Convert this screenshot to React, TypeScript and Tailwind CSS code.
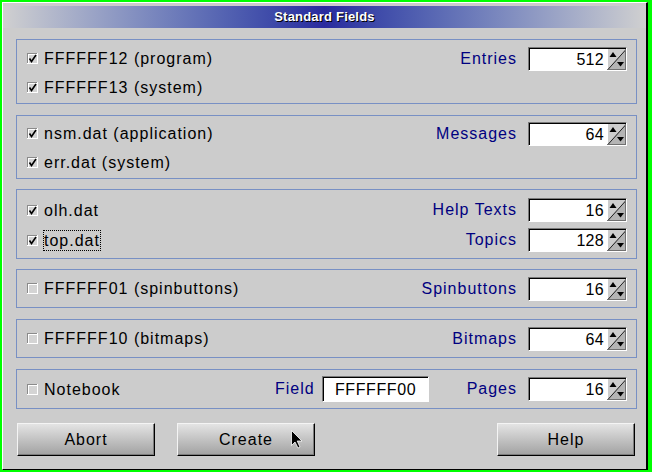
import React from 'react';

const font = "font-['Liberation_Sans',Arial,sans-serif]";

const CheckBox: React.FC<{ checked: boolean }> = ({ checked }) => (
  <svg width="11" height="11" viewBox="0 0 11 11" className="shrink-0">
    <rect x="0" y="0" width="11" height="11" fill="#ffffff" />
    <rect x="0" y="0" width="10" height="10" fill="#8a8a8a" />
    <rect x="1" y="1" width="9" height="9" fill="#d4d4d4" />
    <rect x="1" y="1" width="9" height="1" fill="#ffffff" />
    <rect x="1" y="1" width="1" height="9" fill="#ffffff" />
    {checked && <path d="M2.5 5.5 L4.5 8.5 L9 2" stroke="#000" strokeWidth="1.6" fill="none" />}
  </svg>
);

const Check: React.FC<{ checked: boolean; focus?: boolean; children: React.ReactNode }> = ({ checked, focus, children }) => (
  <div className="flex items-center gap-[6px]">
    <CheckBox checked={checked} />
    <span className={'leading-[19px] ' + (focus ? 'outline-1 outline-dotted outline-black' : '')}>{children}</span>
  </div>
);

const SpinButton = () => (
  <svg width="19" height="21" viewBox="0 0 19 21" className="shrink-0">
    <rect x="0" y="0" width="19" height="21" fill="#b4b4b4" />
    <path d="M0 0 H19 L0 21 Z" fill="#cdcdcd" />
    <line x1="0.5" y1="21" x2="19" y2="0.5" stroke="#202020" strokeWidth="1" />
    <rect x="0" y="0" width="1" height="21" fill="#ffffff" />
    <rect x="18" y="0" width="1" height="21" fill="#707070" />
    <rect x="0" y="20" width="19" height="1" fill="#707070" />
    <path d="M2.5 8 L6 3 L9.5 8 Z" fill="#000" />
    <path d="M10 13 L17 13 L13.5 17.5 Z" fill="#000" />
  </svg>
);

const SpinField: React.FC<{ value: string }> = ({ value }) => (
  <div className="flex h-[24px] w-[99px] border border-t-[#7a7a7a] border-l-[#7a7a7a] border-b-white border-r-white">
    <div className="flex flex-1 border-t border-l border-black bg-white">
      <span className="flex-1 text-right pr-[3px] leading-[21px] tracking-[0.3px]">{value}</span>
      <SpinButton />
    </div>
  </div>
);

const Labeled: React.FC<{ label: string; value: string }> = ({ label, value }) => (
  <div className="flex items-center gap-[11px]">
    <span className="text-[#000080]">{label}</span>
    <SpinField value={value} />
  </div>
);

const Row: React.FC<{ h: string; left?: React.ReactNode; right?: React.ReactNode }> = ({ h, left, right }) => (
  <div className={`flex items-center justify-between pl-[10px] pr-[9px] ${h}`}>
    <div>{left}</div>
    <div>{right}</div>
  </div>
);

const Box: React.FC<{ className: string; children: React.ReactNode }> = ({ className, children }) => (
  <div className={`ml-[13px] w-[621px] border border-[#7890c4] ${className}`}>{children}</div>
);

const Button: React.FC<{ label: string; className?: string; children?: React.ReactNode }> = ({ label, className, children }) => (
  <div
    className={`relative flex h-[33px] w-[138px] items-center justify-center border border-t-[#f4f4f4] border-l-[#f4f4f4] border-b-black border-r-black bg-linear-to-b from-[#e4e4e4] to-[#a2a2a2] shadow-[inset_-1px_-1px_0_#7c7c7c] ${className ?? ''}`}
  >
    <span>{label}</span>
    {children}
  </div>
);

export default function App() {
  return (
    <div className={`h-[472px] w-[652px] bg-[#00ff00] pl-[2px] pt-[2px] text-[16px] tracking-[1px] text-black ${font}`}>
      <div className="h-[468px] w-[646px] border-l border-t border-r-2 border-b border-l-white border-t-white border-r-black border-b-black bg-[#cccccc]">
        <div className="mt-[3px] flex h-[22px] items-center justify-center bg-linear-to-r from-[#d0d0d0] via-[#2a2a9e] to-[#d0d0d0]">
          <span className="text-[13px] font-bold tracking-[0.2px] text-white [text-shadow:1px_1px_0_#000]">Standard Fields</span>
        </div>

        <Box className="mt-[11px] h-[65px] pt-[4px]">
          <Row h="h-[29px]" left={<Check checked>FFFFFF12 (program)</Check>} right={<Labeled label="Entries" value="512" />} />
          <Row h="h-[29px]" left={<Check checked>FFFFFF13 (system)</Check>} />
        </Box>

        <Box className="mt-[11px] h-[64px] pt-[3px]">
          <Row h="h-[29px]" left={<Check checked>nsm.dat (application)</Check>} right={<Labeled label="Messages" value="64" />} />
          <Row h="h-[29px]" left={<Check checked>err.dat (system)</Check>} />
        </Box>

        <Box className="mt-[10px] h-[70px] pt-[5px]">
          <Row h="h-[30px]" left={<Check checked>olh.dat</Check>} right={<Labeled label="Help Texts" value="16" />} />
          <Row h="h-[30px]" left={<Check checked focus>top.dat</Check>} right={<Labeled label="Topics" value="128" />} />
        </Box>

        <Box className="mt-[10px] flex h-[39px] flex-col justify-center">
          <Row h="h-[29px]" left={<Check checked={false}>FFFFFF01 (spinbuttons)</Check>} right={<Labeled label="Spinbuttons" value="16" />} />
        </Box>

        <Box className="mt-[11px] flex h-[39px] flex-col justify-center">
          <Row h="h-[29px]" left={<Check checked={false}>FFFFFF10 (bitmaps)</Check>} right={<Labeled label="Bitmaps" value="64" />} />
        </Box>

        <Box className="mt-[11px] flex h-[40px] flex-col justify-center">
          <Row
            h="h-[29px]"
            left={<Check checked={false}>Notebook</Check>}
            right={
              <div className="flex items-center">
                <span className="text-[#000080]">Field</span>
                <div className="ml-[7px] flex h-[26px] w-[107px] border border-t-[#7a7a7a] border-l-[#7a7a7a] border-b-white border-r-white">
                  <div className="flex flex-1 items-center justify-center border-t border-l border-black bg-white tracking-[0.6px]">
                    FFFFFF00
                  </div>
                </div>
                <div className="ml-[38px]">
                  <Labeled label="Pages" value="16" />
                </div>
              </div>
            }
          />
        </Box>

        <div className="mt-[14px] ml-[14px] flex w-[618px]">
          <Button label="Abort" />
          <Button label="Create" className="ml-[22px]">
            <svg width="12" height="19" viewBox="0 0 12 19" className="absolute left-[113px] top-[6px]">
              <path d="M0.5 0.5 L0.5 15.5 L4 12 L7 18 L9 17 L6.2 11 L11 11 Z" fill="#000" stroke="#fff" strokeWidth="0.8" />
            </svg>
          </Button>
          <div className="flex-1" />
          <Button label="Help" />
        </div>
      </div>
    </div>
  );
}
